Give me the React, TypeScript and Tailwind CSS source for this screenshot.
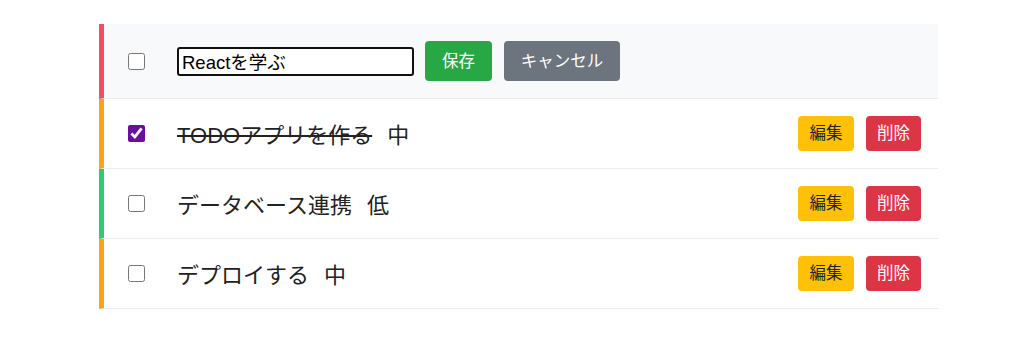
import { useState } from "react";

type Priority = "高" | "中" | "低";

interface Todo {
  id: number;
  text: string;
  done: boolean;
  priority: Priority;
}

const BORDER: Record<Priority, string> = {
  高: "border-l-[#f44c63]",
  中: "border-l-[#ffa411]",
  低: "border-l-[#2ecc71]",
};

const FONT = { fontFamily: '"Liberation Sans", "Noto Sans CJK JP", sans-serif' };

export default function App() {
  const [todos, setTodos] = useState<Todo[]>([
    { id: 1, text: "Reactを学ぶ", done: false, priority: "高" },
    { id: 2, text: "TODOアプリを作る", done: true, priority: "中" },
    { id: 3, text: "データベース連携", done: false, priority: "低" },
    { id: 4, text: "デプロイする", done: false, priority: "中" },
  ]);
  const [editing, setEditing] = useState<number | null>(1);
  const [draft, setDraft] = useState("Reactを学ぶ");

  const toggle = (id: number) =>
    setTodos((ts) => ts.map((t) => (t.id === id ? { ...t, done: !t.done } : t)));

  const save = () => {
    setTodos((ts) => ts.map((t) => (t.id === editing ? { ...t, text: draft } : t)));
    setEditing(null);
  };

  return (
    <div className="w-[1024px] h-[341px] bg-white pt-[24px] pl-[99px]" style={FONT}>
      <ul className="w-[839px]">
        {todos.map((t) => {
          const isEdit = editing === t.id;
          return (
            <li
              key={t.id}
              className={`flex items-center border-l-[5px] border-b border-b-[#ececec] pl-[24px] pr-[17px] py-[17px] ${BORDER[t.priority]} ${isEdit ? "bg-[#f8f9fa]" : "bg-white"}`}
            >
              <input
                type="checkbox"
                checked={t.done}
                onChange={() => toggle(t.id)}
                className="w-[17px] h-[17px] accent-[#6a0f9c] mr-[32px] shrink-0"
              />
              {isEdit ? (
                <div className="flex items-center">
                  <input
                    value={draft}
                    onChange={(e) => setDraft(e.target.value)}
                    className="w-[237px] h-[29px] border-2 border-[#111] rounded-[3px] px-[3px] text-[18.5px] text-black bg-white outline-none"
                    style={FONT}
                  />
                  <button
                    onClick={save}
                    className="ml-[11px] w-[67px] h-[40px] rounded-[4px] bg-[#28a745] text-white text-[16.5px]"
                  >
                    保存
                  </button>
                  <button
                    onClick={() => setEditing(null)}
                    className="ml-[12px] w-[116px] h-[40px] rounded-[4px] bg-[#6c757d] text-white text-[16.5px]"
                  >
                    キャンセル
                  </button>
                </div>
              ) : (
                <>
                  <span className="text-[22px] leading-[31px] mt-[4px] text-[#222]">
                    <span className={t.done ? "line-through" : ""}>{t.text}</span>
                    <span className="ml-[15px]">{t.priority}</span>
                  </span>
                  <div className="ml-auto flex items-center gap-[12px]">
                    <button
                      onClick={() => {
                        setEditing(t.id);
                        setDraft(t.text);
                      }}
                      className="w-[56px] h-[35px] rounded-[4px] bg-[#ffc107] text-[#212529] text-[16.5px]"
                    >
                      編集
                    </button>
                    <button
                      onClick={() => setTodos((ts) => ts.filter((x) => x.id !== t.id))}
                      className="w-[55px] h-[35px] rounded-[4px] bg-[#dc3545] text-white text-[16.5px]"
                    >
                      削除
                    </button>
                  </div>
                </>
              )}
            </li>
          );
        })}
      </ul>
    </div>
  );
}
